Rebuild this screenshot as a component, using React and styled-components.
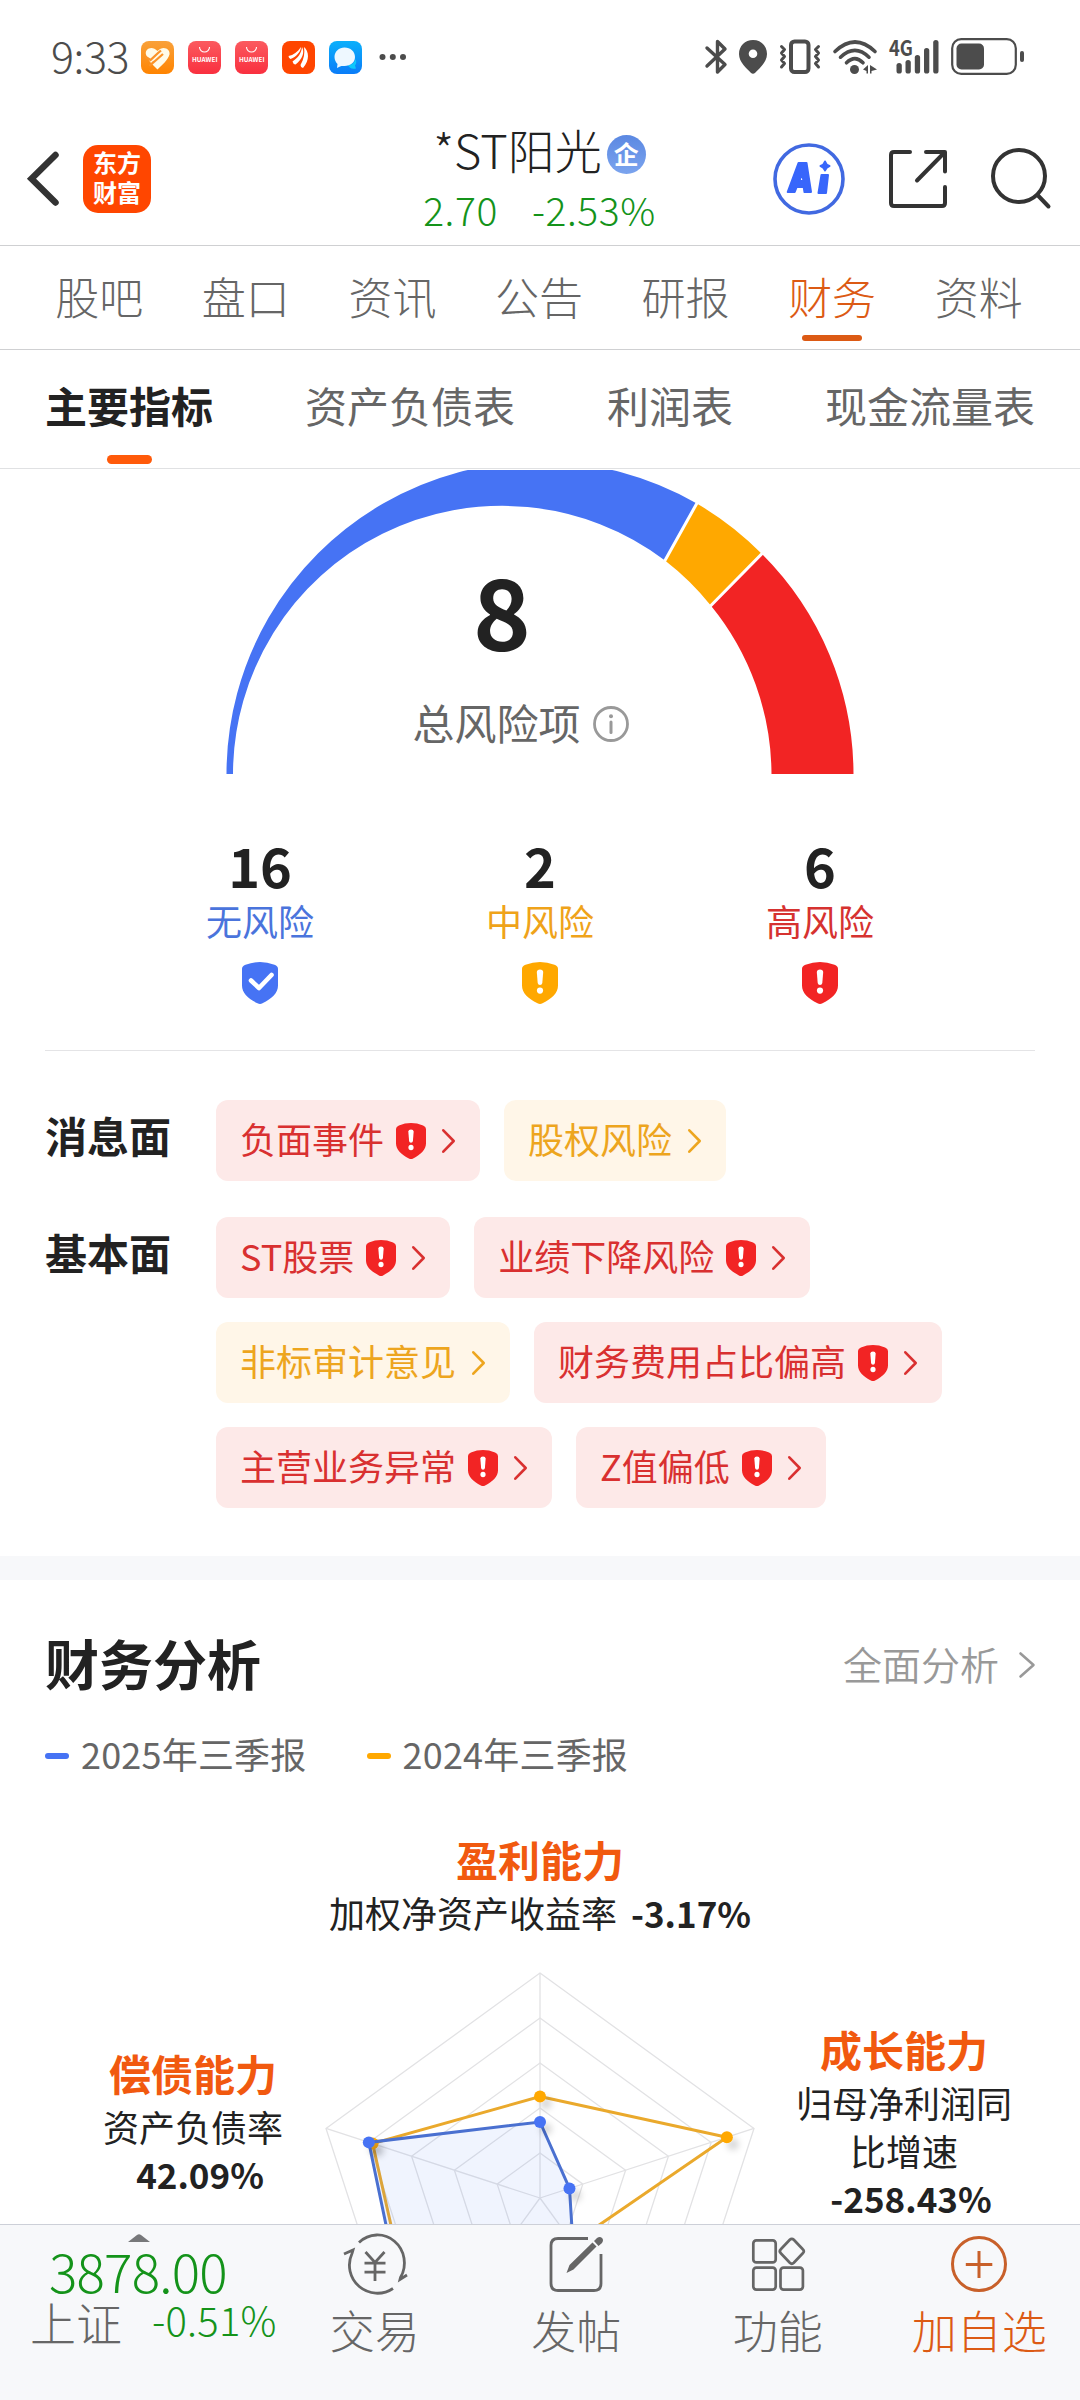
import React from 'react';
import styled, { createGlobalStyle } from 'styled-components';

const C = {
  ink: '#222222',
  text: '#666666',
  mute: '#999999',
  green: '#14931a',
  orange: '#dc5a14',
  vivid: '#f1590f',
  blue: '#4673f4',
  amber: '#ffa800',
  red: '#f22424',
};

const Global = createGlobalStyle`
  * { box-sizing: border-box; }
  body { margin: 0; background: #fff; }
  body, text { font-family: "Noto Sans CJK SC", "Noto Sans", sans-serif; }
`;

const Phone = styled.div`
  width: 1080px;
  height: 2400px;
  display: flex;
  flex-direction: column;
  overflow: hidden;
  background: #fff;
  color: ${C.ink};
  white-space: nowrap;
`;

const Icon = styled.svg`
  display: block;
  flex: none;
  overflow: visible;
`;

/* ---------- status bar ---------- */
const StatusBar = styled.div`
  flex: none;
  height: 114px;
  padding: 38px 56px 0 51px;
  display: flex;
  justify-content: space-between;
  align-items: flex-start;
`;
const StatusLeft = styled.div`
  display: flex;
  align-items: center;
  height: 38px;
  gap: 14px;
`;
const StatusRight = styled.div`
  display: flex;
  align-items: center;
  height: 37px;
  gap: 12px;
`;
const Clock = styled.span`
  width: 76px;
  font-size: 43px;
  line-height: 38px;
  font-weight: 300;
  letter-spacing: -0.4px;
  color: #4c4c4c;
  margin-top: -7px;
`;

const gray = '#4c4c4c';

function AppIcon({ kind }) {
  return (
    <Icon width="33" height="33" viewBox="0 0 33 33">
      <defs>
        <linearGradient id="gHealth" x1="0" y1="0" x2="0" y2="1">
          <stop offset="0" stopColor="#f9a13a" />
          <stop offset="1" stopColor="#ff8400" />
        </linearGradient>
        <linearGradient id="gStore" x1="0" y1="0" x2="0" y2="1">
          <stop offset="0" stopColor="#fb5a5f" />
          <stop offset="1" stopColor="#f9303f" />
        </linearGradient>
        <linearGradient id="gChat" x1="0" y1="0" x2="0" y2="1">
          <stop offset="0" stopColor="#0cb0fb" />
          <stop offset="1" stopColor="#0a7cf8" />
        </linearGradient>
      </defs>
      {kind === 'health' && (
        <g>
          <rect width="33" height="33" rx="8" fill="url(#gHealth)" />
          <path d="M16.500 10C11 4 3.500 8 5 13.500 6.500 19 12 24 16.500 28.500 21 24 27 19 28.500 13.500 29.500 8 22 4 16.500 10z" fill="#fffbe8" />
          <path d="M4 15.500L9.500 19 16.500 12.500 20 9.500M9.500 24l12.500-11M13 20.500L8.500 25" fill="none" stroke="#fb9327" strokeWidth="2.300" />
        </g>
      )}
      {kind === 'store' && (
        <g>
          <rect width="33" height="33" rx="8" fill="url(#gStore)" />
          <path d="M11.500 6a5 5 0 0 0 10 0" fill="none" stroke="#fff" strokeWidth="1.100" />
          <text x="4" y="21.300" fontSize="6.200" fontWeight="700" fill="#fff" textLength="25.500" lengthAdjust="spacingAndGlyphs">HUAWEI</text>
        </g>
      )}
      {kind === 'wealth' && (
        <g>
          <rect width="33" height="33" rx="8" fill="#ff4500" />
          <path d="M6.500 15c5-1 9-4 12.500-9 0 4-4 9.500-10.500 12q-2-1-2-3z" fill="#fff" />
          <path d="M10.500 20.500C16 17 19.500 12 20 6c3 5 .5 12.500-6.500 17.500q-2.500-.5-3-3z" fill="#fff" />
          <path d="M18.500 24C22 18 23 12 22 6c5 4.500 6 13-1 21q-2.500-.5-2.500-3z" fill="#fff" />
        </g>
      )}
      {kind === 'chat' && (
        <g>
          <rect width="33" height="33" rx="8" fill="url(#gChat)" />
          <path d="M19 24c4 0 7-3 7.500-6 1.500 3 .5 5-.5 6.500l1 3c-4 1-7-.5-8-3.500z" fill="#0cc8fb" />
          <path d="M15.500 6.500c6 0 10.500 4 10.500 9.500s-4.500 9-10.500 9c-2 0-3.500-.5-5 .8L8 27l.5-4C7 21.500 5.500 19 5.500 16c0-5.500 4.500-9.500 10-9.500z" fill="#eef8ff" />
        </g>
      )}
    </Icon>
  );
}

const StatusIcons = () => (
  <StatusRight>
    <Icon width="22" height="35" viewBox="0 0 22 35" fill="none" stroke={gray} strokeWidth="3.400" strokeLinecap="round" strokeLinejoin="round">
      <path d="M2 9L20 25.500 12.500 33V2.500L20 10 2 27" />
    </Icon>
    <Icon width="28" height="34" viewBox="0 0 28 34">
      <path fillRule="evenodd" fill={gray} d="M14 0C6 0 0 6 0 14c0 8.500 8 14.500 11.800 18.800q2.200 2 4.400 0C20 28.500 28 22.500 28 14 28 6 22 0 14 0zm0 9.500a4.300 4.300 0 1 1 0 8.600 4.300 4.300 0 0 1 0-8.600z" />
    </Icon>
    <Icon width="42" height="35" viewBox="0 0 42 35" fill="none" stroke={gray} strokeLinecap="round" strokeLinejoin="round">
      <rect x="12" y="2.500" width="17.500" height="30.500" rx="3.500" strokeWidth="4" />
      <path d="M2.500 7.500l3 3-3 3.500 3 3.500-3 3.500 3 3.500-3 3.500M39.500 7.500l-3 3 3 3.500-3 3.500 3 3.500-3 3.500 3 3.500" strokeWidth="3" />
    </Icon>
    <Icon width="44" height="34" viewBox="0 0 44 34" fill="none" stroke={gray} strokeWidth="3.600" strokeLinecap="round">
      <path d="M2 11.500Q22-7.500 42 11.500M7.500 17.200Q22 3.500 36 17.200M13.500 22.800Q22 14.500 30 22.800" />
      <circle cx="21.500" cy="29.500" r="4.500" fill={gray} stroke="none" />
      <path d="M30 29.500l5-4.500v8.500h-1.500V31zM44 29.500l-7-4.500v8.500h1.500V31z" fill={gray} stroke="none" />
    </Icon>
    <Icon width="50" height="35" viewBox="0 0 50 35">
      <text x="0" y="17" fontSize="21.500" fontWeight="700" fill={gray} textLength="24" lengthAdjust="spacingAndGlyphs">4G</text>
      <g fill={gray}>
        <rect x="7.500" y="24" width="5.300" height="10.500" rx="2.600" />
        <rect x="16.500" y="21" width="5.300" height="13.500" rx="2.600" />
        <rect x="25.800" y="16" width="5.300" height="18.500" rx="2.600" />
        <rect x="35" y="9" width="5.300" height="25.500" rx="2.600" />
        <rect x="44.200" y="1" width="5.300" height="33.500" rx="2.600" />
      </g>
    </Icon>
    <Icon width="73" height="37" viewBox="0 0 73 37">
      <rect x="1.200" y="1.200" width="63.600" height="34.600" rx="9" fill="none" stroke={gray} strokeWidth="2.200" />
      <rect x="5.500" y="5.500" width="27.500" height="26" rx="5" fill={gray} />
      <rect x="69" y="13" width="4" height="11" rx="2" fill={gray} />
    </Icon>
  </StatusRight>
);

/* ---------- header ---------- */
const Header = styled.header`
  flex: none;
  height: 132px;
  padding: 0 29px 2px 28px;
  display: grid;
  grid-template-columns: 1fr auto 1fr;
  align-items: center;
  border-bottom: 1px solid #cfd0d2;
`;
const HeaderLeft = styled.div`
  display: flex;
  align-items: center;
  gap: 24px;
`;
const HeaderRight = styled.div`
  display: flex;
  align-items: center;
  justify-content: flex-end;
  gap: 44px;
`;
const Logo = styled.div`
  width: 68px;
  height: 68px;
  border-radius: 15px;
  background: #ff4600;
  color: #fff;
  font-size: 24px;
  line-height: 30px;
  font-weight: 700;
  text-align: center;
  padding-top: 2px;
  margin-bottom: -1px;
`;
const Stock = styled.div`
  display: flex;
  flex-direction: column;
  align-items: center;
`;
const StockName = styled.div`
  display: flex;
  align-items: center;
  gap: 5px;
  height: 58px;
  font-size: 47px;
  line-height: 58px;
  font-weight: 300;
  > b {
    font-weight: inherit;
    padding-bottom: 9px;
  }
`;
const StockBadge = styled.span`
  width: 39px;
  height: 39px;
  margin-top: 1px;
  border-radius: 50%;
  background: linear-gradient(#5b88e2, #7ba4ee);
  color: #fff;
  font-size: 25px;
  line-height: 37px;
  font-weight: 700;
  text-align: center;
`;
const StockQuote = styled.div`
  display: flex;
  gap: 34px;
  height: 50px;
  font-size: 39px;
  line-height: 52px;
  font-weight: 300;
  letter-spacing: 0.6px;
  color: ${C.green};
`;

/* ---------- tabs ---------- */
const Tabs = styled.nav`
  flex: none;
  height: 104px;
  padding: 0 28px 0 26px;
  display: grid;
  grid-template-columns: repeat(7, 1fr);
  border-bottom: 1px solid #cfd0d2;
`;
const Tab = styled.div`
  display: flex;
  flex-direction: column;
  align-items: center;
  padding-top: 18px;
  font-size: 44px;
  line-height: 64px;
  font-weight: 300;
  color: ${(p) => (p.$on ? C.orange : C.text)};
  &::after {
    content: '';
    width: 60px;
    height: 6px;
    margin-top: 7px;
    border-radius: 3px;
    background: ${(p) => (p.$on ? C.orange : 'transparent')};
  }
`;
const SubTabs = styled.nav`
  flex: none;
  height: 119px;
  padding: 0 45px;
  display: flex;
  justify-content: space-between;
  border-bottom: 1px solid #e0e1e3;
`;
const SubTab = styled.div`
  display: flex;
  flex-direction: column;
  align-items: center;
  padding-top: 25px;
  font-size: 42px;
  line-height: 60px;
  font-weight: ${(p) => (p.$on ? 700 : 400)};
  color: ${(p) => (p.$on ? C.ink : C.text)};
  &::after {
    content: '';
    width: 45px;
    height: 9px;
    margin-top: 20px;
    border-radius: 5px;
    background: ${(p) => (p.$on ? '#ff5a0a' : 'transparent')};
  }
`;

/* ---------- scroll body ---------- */
const Body = styled.main`
  flex: 1;
  min-height: 0;
  overflow: hidden;
  padding-top: 1px;
`;
const Gauge = styled.div`
  height: 306px;
  display: grid;
  > * { grid-area: 1 / 1; }
`;
const GaugeText = styled.div`
  width: 1004px;
  padding-top: 80px;
  display: flex;
  flex-direction: column;
  align-items: center;
`;
const GaugeNumber = styled.div`
  font-size: 98px;
  line-height: 116px;
  font-weight: 700;
`;
const GaugeLabel = styled.div`
  display: flex;
  align-items: center;
  gap: 12px;
  margin: 26px 0 0 37px;
  font-size: 42px;
  line-height: 60px;
  color: ${C.text};
  > svg { margin-top: 2px; }
`;
const Stats = styled.div`
  display: flex;
  padding: 57px 120px 0;
`;
const Stat = styled.div`
  flex: 1;
  display: flex;
  flex-direction: column;
  align-items: center;
  font-size: 36px;
  line-height: 50px;
  color: ${(p) => p.$color};
  > svg { margin-top: 17px; }
`;
const StatNumber = styled.b`
  font-size: 54px;
  line-height: 64px;
  margin-bottom: -2px;
  color: ${C.ink};
`;
const Rule = styled.div`
  height: 1px;
  margin: 46px 45px 0;
  background: #e4e4e6;
`;
const RiskGroups = styled.div`
  padding: 49px 45px 48px;
  display: flex;
  flex-direction: column;
  gap: 36px;
`;
const RiskGroup = styled.div`
  display: flex;
`;
const RiskTitle = styled.div`
  width: 171px;
  font-size: 42px;
  line-height: 70px;
  font-weight: 700;
`;
const ChipRows = styled.div`
  display: flex;
  flex-direction: column;
  gap: 24px;
`;
const ChipRow = styled.div`
  display: flex;
  gap: 24px;
`;
const ChipBox = styled.div`
  display: flex;
  align-items: center;
  height: 81px;
  padding: 0 25px 0 24px;
  border-radius: 12px;
  font-size: 36px;
  color: ${(p) => (p.$high ? '#d93030' : '#eda51e')};
  background: ${(p) => (p.$high ? '#fde9e8' : '#fff6e8')};
  > span { line-height: 76px; height: 81px; }
`;
const ChipShield = styled.span`
  display: flex;
  align-items: center;
  margin-left: 12px;
`;
const ChipArrow = styled(Icon)`
  margin-left: 16px;
`;

function Shield({ w, h, color, check }) {
  return (
    <Icon width={w} height={h} viewBox="0 0 36 42" preserveAspectRatio="none">
      <path d="M3.500 2.800Q18-2.600 32.500 2.800 36 4 36 7v16.500c0 7.500-6 13-15.500 17.800q-2.500 1.300-5 0C6 36.500 0 31 0 23.500V7Q0 4 3.500 2.800z" fill={color} />
      {check ? (
        <path d="M9 18.500l8 7.500L29.500 13" fill="none" stroke="#fff" strokeWidth="4.600" strokeLinecap="round" strokeLinejoin="round" />
      ) : (
        <g fill="#fff">
          <path d="M14.800 10Q15 7.500 18 7.500T21.200 10l-.9 11q-.3 2-2.300 2t-2.300-2z" />
          <circle cx="18" cy="28.600" r="3.100" />
        </g>
      )}
    </Icon>
  );
}

function Chip({ label, high }) {
  return (
    <ChipBox $high={high}>
      <span>{label}</span>
      {high && (
        <ChipShield>
          <Shield w="30" h="36" color={C.red} />
        </ChipShield>
      )}
      <ChipArrow width="13" height="24" viewBox="0 0 13 24" fill="none" stroke="currentColor" strokeWidth="2.600" strokeLinecap="round" strokeLinejoin="round">
        <path d="M1.300 1.300L11.700 12 1.300 22.700" />
      </ChipArrow>
    </ChipBox>
  );
}

const Band = styled.div`
  height: 24px;
  background: #f7f8fa;
`;

/* ---------- analysis ---------- */
const SectionHead = styled.div`
  display: flex;
  justify-content: space-between;
  align-items: center;
  padding: 43px 45px 0 45px;
`;
const SectionTitle = styled.h2`
  margin: 0;
  font-size: 54px;
  line-height: 80px;
  font-weight: 700;
`;
const More = styled.div`
  display: flex;
  align-items: center;
  gap: 20px;
  font-size: 39px;
  line-height: 76px;
  font-weight: 350;
  color: ${C.mute};
  > svg { margin-top: 4px; }
`;
const Legend = styled.div`
  display: flex;
  gap: 60px;
  padding: 24px 45px 0;
`;
const LegendItem = styled.div`
  display: flex;
  align-items: center;
  gap: 12px;
  font-size: 36px;
  line-height: 52px;
  letter-spacing: 0.2px;
  color: ${C.text};
  &::before {
    content: '';
    width: 24px;
    height: 6px;
    margin-top: 5px;
    border-radius: 3px;
    background: ${(p) => p.$color};
  }
`;
const Ability = styled.div`
  display: flex;
  flex-direction: column;
  align-items: center;
  width: ${(p) => p.$w};
  padding-top: ${(p) => p.$top};
  font-size: 36px;
  line-height: 48px;
  text-align: center;
  > h3 {
    margin: 0 0 1px;
    font-size: 42px;
    line-height: 56px;
    color: ${C.vivid};
  }
`;
const Value = styled.b`
  margin-left: 14px;
  font-size: 35px;
`;
const RadarRow = styled.div`
  display: flex;
  align-items: flex-start;
  padding-left: 77px;
`;
const RadarSvg = styled(Icon)`
  margin: 26px 0 0 11px;
`;

const polar = (i, r) => {
  const a = (i * 72 * Math.PI) / 180;
  return [220 + r * Math.sin(a), 235 - r * Math.cos(a)];
};
const ring = (values) => values.map((r, i) => polar(i, r).map((n) => n.toFixed(1)).join(',')).join(' ');

function Radar() {
  const last = [101.5, 196.5, 55.8, 201.5, 176];
  const now = [76, 31, 56, 211, 180];
  return (
    <RadarSvg width="440" height="290" viewBox="0 0 440 290" style={{ overflow: 'hidden' }}>
      <defs>
        <filter id="dot" x="-100%" y="-100%" width="300%" height="300%">
          <feDropShadow dx="6" dy="7" stdDeviation="3" floodColor="#000" floodOpacity="0.15" />
        </filter>
      </defs>
      <g fill="none" stroke="#e2e2e4" strokeWidth="1.300">
        {[45, 90, 135, 180, 225].map((r) => (
          <polygon key={r} points={ring([r, r, r, r, r])} />
        ))}
        {[0, 1, 2, 3, 4].map((i) => {
          const [x, y] = polar(i, 225);
          return <line key={i} x1="220" y1="235" x2={x} y2={y} />;
        })}
      </g>
      <polygon points={ring(last)} fill="none" stroke="#eaa92c" strokeWidth="3" />
      {[0, 1, 4].map((i) => {
        const [x, y] = polar(i, last[i]);
        return <circle key={i} cx={x} cy={y} r="6" fill={C.amber} filter="url(#dot)" />;
      })}
      <polygon points={ring(now)} fill="#4673f4" fillOpacity="0.08" stroke="#4a70d0" strokeWidth="3" />
      {[0, 1, 4].map((i) => {
        const [x, y] = polar(i, now[i]);
        return <circle key={i} cx={x} cy={y} r="6" fill={C.blue} filter="url(#dot)" />;
      })}
    </RadarSvg>
  );
}

/* ---------- bottom bar ---------- */
const BottomBar = styled.footer`
  flex: none;
  height: 176px;
  display: flex;
  border-top: 1px solid #cdd0d8;
  background: #f7f8fa;
`;
const IndexBox = styled.div`
  width: 274px;
  padding: 9px 0 0 30px;
  display: flex;
  flex-direction: column;
`;
const IndexCaret = styled(Icon)`
  margin-left: 98px;
`;
const IndexValue = styled.div`
  margin: -7px 0 0 19px;
  font-size: 53px;
  line-height: 70px;
  font-weight: 300;
  letter-spacing: -0.8px;
  color: ${C.green};
`;
const IndexLine = styled.div`
  display: flex;
  gap: 30px;
  margin-top: -14px;
  font-size: 46px;
  line-height: 60px;
  font-weight: 300;
  color: ${C.text};
  > span {
    font-size: 40px;
    line-height: 56px;
    letter-spacing: 0.2px;
    color: ${C.green};
  }
`;
const Action = styled.div`
  width: 201.500px;
  padding-top: 9px;
  display: flex;
  flex-direction: column;
  align-items: center;
  font-size: 45px;
  line-height: 66px;
  font-weight: 300;
  color: ${(p) => (p.$on ? C.orange : C.text)};
  > svg { margin-bottom: 3px; }
`;

const TradeIcon = () => (
  <Icon width="64" height="60" viewBox="0 0 64 60" fill="none" stroke={C.text} strokeWidth="2.800">
    <path d="M16 8.500a27 28 0 0 1 41.500 35l-.5 2 7-4.500" />
    <path d="M50 54.500a28 28 0 0 1-41-35l1-3.500-9 4" />
    <path d="M22.500 18L32 28.500 41.500 18M32 28.500V47M21.500 29.200h21M21.500 38.200h21" />
  </Icon>
);
const PostIcon = () => (
  <Icon width="54" height="60" viewBox="0 0 54 60">
    <path d="M39 4.500H9Q2 4.500 2 11.500v38q0 7 7 7h36q7 0 7-7V20" fill="none" stroke={C.text} strokeWidth="2.800" />
    <path d="M17.500 39l3-8L43.500 8.500l4 4L24.500 35.500z M45 7l3-3q3-2 5 0t0 5l-3.500 3z" fill={C.text} />
  </Icon>
);
const GridIcon = () => (
  <Icon width="54" height="60" viewBox="0 0 54 60" fill="none" stroke={C.text} strokeWidth="2.700">
    <rect x="2.300" y="6.400" width="22.400" height="22" rx="3" />
    <rect x="2.300" y="33.600" width="22.400" height="22" rx="3" />
    <rect x="29.500" y="33.600" width="22.400" height="22" rx="3" />
    <path d="M38.800 5.800q2-2 4 0l9 9.500q2 2 0 4l-9 9.500q-2 2-4 0l-9-9.500q-2-2 0-4z" />
  </Icon>
);
const AddIcon = () => (
  <Icon width="56" height="60" viewBox="0 0 56 60" fill="none" stroke="#c8602a" strokeWidth="3">
    <circle cx="28" cy="30" r="26.500" />
    <path d="M28 17v27M14.800 30.500h26.500" />
  </Icon>
);

const Caret = () => (
  <IndexCaret width="22" height="8" viewBox="0 0 22 8">
    <path d="M0 8L9 1q2-1.500 4 0l9 7z" fill="#77787a" />
  </IndexCaret>
);

export default function App() {
  return (
    <Phone>
      <Global />
      <StatusBar>
        <StatusLeft>
          <Clock>9:33</Clock>
          <AppIcon kind="health" />
          <AppIcon kind="store" />
          <AppIcon kind="store" />
          <AppIcon kind="wealth" />
          <AppIcon kind="chat" />
          <Icon width="34" height="8" viewBox="0 0 34 8" fill={gray}>
            <circle cx="6.500" cy="4" r="3" />
            <circle cx="16.800" cy="4" r="3" />
            <circle cx="27" cy="4" r="3" />
          </Icon>
        </StatusLeft>
        <StatusIcons />
      </StatusBar>

      <Header>
        <HeaderLeft>
          <Icon width="31" height="54" viewBox="0 0 31 54" fill="none" stroke="#333" strokeWidth="6.500" strokeLinecap="round">
            <path d="M27.500 3L3.500 26.800 27.500 50.500" />
          </Icon>
          <Logo>
            东方
            <br />
            财富
          </Logo>
        </HeaderLeft>
        <Stock>
          <StockName>
            <b>*ST阳光</b>
            <StockBadge>企</StockBadge>
          </StockName>
          <StockQuote>
            <span>2.70</span>
            <span>-2.53%</span>
          </StockQuote>
        </Stock>
        <HeaderRight>
          <Icon width="72" height="72" viewBox="0 0 72 72">
            <circle cx="36" cy="36" r="34" fill="none" stroke="#4169e1" strokeWidth="3.600" />
            <g fill="#3866fb" stroke="#3866fb" strokeWidth="2" strokeLinejoin="round">
              <path fillRule="evenodd" d="M25.500 20h8l4.500 29h-6.500l-.8-5h-7l-2 5h-7zm3.500 10l-2.500 8h4z" />
              <path d="M48.500 32h6.500L53 50h-7.500z" />
              <path d="M52 18.500q1 3.500 4.500 4.500-3.500 1-4.500 4.500-1-3.500-4.500-4.500 3.500-1 4.500-4.500z" />
            </g>
          </Icon>
          <Icon width="58" height="58" viewBox="0 0 58 58" fill="none" stroke="#333" strokeWidth="4" strokeLinecap="round" strokeLinejoin="round">
            <path d="M21 2H5Q2 2 2 5v48q0 3 3 3h48q3 0 3-3V37M37 2h19v19.500M55 3L28 30.500" />
          </Icon>
          <Icon width="60" height="62" viewBox="0 0 60 62" fill="none" stroke="#333" strokeWidth="4" strokeLinecap="round">
            <circle cx="28" cy="28" r="26" />
            <path d="M46.500 47l11 11.500" />
          </Icon>
        </HeaderRight>
      </Header>

      <Tabs>
        {['股吧', '盘口', '资讯', '公告', '研报', '财务', '资料'].map((t) => (
          <Tab key={t} $on={t === '财务'}>{t}</Tab>
        ))}
      </Tabs>
      <SubTabs>
        {['主要指标', '资产负债表', '利润表', '现金流量表'].map((t, i) => (
          <SubTab key={t} $on={i === 0}>{t}</SubTab>
        ))}
      </SubTabs>

      <Body>
        <Gauge>
          <Icon width="1080" height="304" viewBox="0 470 1080 304" style={{ overflow: 'hidden' }}>
            <path d="M226.500 774.500A313.500 312.500 0 0 1 696.800 503.500L665 560.500A269.200 268.500 0 0 0 233 774.500z" fill={C.blue} />
            <path d="M696.800 503.500A313.500 312.500 0 0 1 761.700 553.800L710.800 605.500A269.200 268.500 0 0 0 665 560.500z" fill={C.amber} />
            <path d="M761.700 553.800A313.500 312.500 0 0 1 853.500 774.500H771.500A269.200 268.500 0 0 0 710.800 605.500z" fill={C.red} />
            <path d="M699 499.500L663 564M764 551.500L708.500 608" stroke="#fff" strokeWidth="3" />
          </Icon>
          <GaugeText>
            <GaugeNumber>8</GaugeNumber>
            <GaugeLabel>
              总风险项
              <Icon width="36" height="36" viewBox="0 0 36 36" fill="none" stroke={C.mute} strokeWidth="2.800">
                <circle cx="18" cy="19" r="16.500" />
                <path d="M18 17v10.500" strokeWidth="3" strokeLinecap="round" />
                <circle cx="18" cy="11.300" r="2" fill={C.mute} stroke="none" />
              </Icon>
            </GaugeLabel>
          </GaugeText>
        </Gauge>

        <Stats>
          <Stat $color="#4a74dc">
            <StatNumber>16</StatNumber>
            无风险
            <Shield w="36" h="42" color={C.blue} check />
          </Stat>
          <Stat $color="#efa31a">
            <StatNumber>2</StatNumber>
            中风险
            <Shield w="36" h="42" color={C.amber} />
          </Stat>
          <Stat $color="#d63230">
            <StatNumber>6</StatNumber>
            高风险
            <Shield w="36" h="42" color={C.red} />
          </Stat>
        </Stats>
        <Rule />

        <RiskGroups>
          <RiskGroup>
            <RiskTitle>消息面</RiskTitle>
            <ChipRow>
              <Chip label="负面事件" high />
              <Chip label="股权风险" />
            </ChipRow>
          </RiskGroup>
          <RiskGroup>
            <RiskTitle>基本面</RiskTitle>
            <ChipRows>
              <ChipRow>
                <Chip label="ST股票" high />
                <Chip label="业绩下降风险" high />
              </ChipRow>
              <ChipRow>
                <Chip label="非标审计意见" />
                <Chip label="财务费用占比偏高" high />
              </ChipRow>
              <ChipRow>
                <Chip label="主营业务异常" high />
                <Chip label="Z值偏低" high />
              </ChipRow>
            </ChipRows>
          </RiskGroup>
        </RiskGroups>
        <Band />

        <SectionHead>
          <SectionTitle>财务分析</SectionTitle>
          <More>
            全面分析
            <Icon width="16" height="26" viewBox="0 0 16 26" fill="none" stroke={C.mute} strokeWidth="2.600" strokeLinecap="round" strokeLinejoin="round">
              <path d="M1.500 1.500L14.500 13 1.500 24.500" />
            </Icon>
          </More>
        </SectionHead>
        <Legend>
          <LegendItem $color={C.blue}>2025年三季报</LegendItem>
          <LegendItem $color={C.amber}>2024年三季报</LegendItem>
        </Legend>

        <Ability $w="1080px" $top="52px">
          <h3>盈利能力</h3>
          <div>
            加权净资产收益率<Value>-3.17%</Value>
          </div>
        </Ability>
        <RadarRow>
          <Ability $w="232px" $top="108px">
            <h3>偿债能力</h3>
            <div>资产负债率</div>
            <Value>42.09%</Value>
          </Ability>
          <Radar />
          <Ability $w="288px" $top="84px">
            <h3>成长能力</h3>
            <div>归母净利润同</div>
            <div>比增速</div>
            <Value>-258.43%</Value>
          </Ability>
        </RadarRow>
      </Body>

      <BottomBar>
        <IndexBox>
          <Caret />
          <IndexValue>3878.00</IndexValue>
          <IndexLine>
            上证<span>-0.51%</span>
          </IndexLine>
        </IndexBox>
        <Action><TradeIcon />交易</Action>
        <Action><PostIcon />发帖</Action>
        <Action><GridIcon />功能</Action>
        <Action $on><AddIcon />加自选</Action>
      </BottomBar>
    </Phone>
  );
}
